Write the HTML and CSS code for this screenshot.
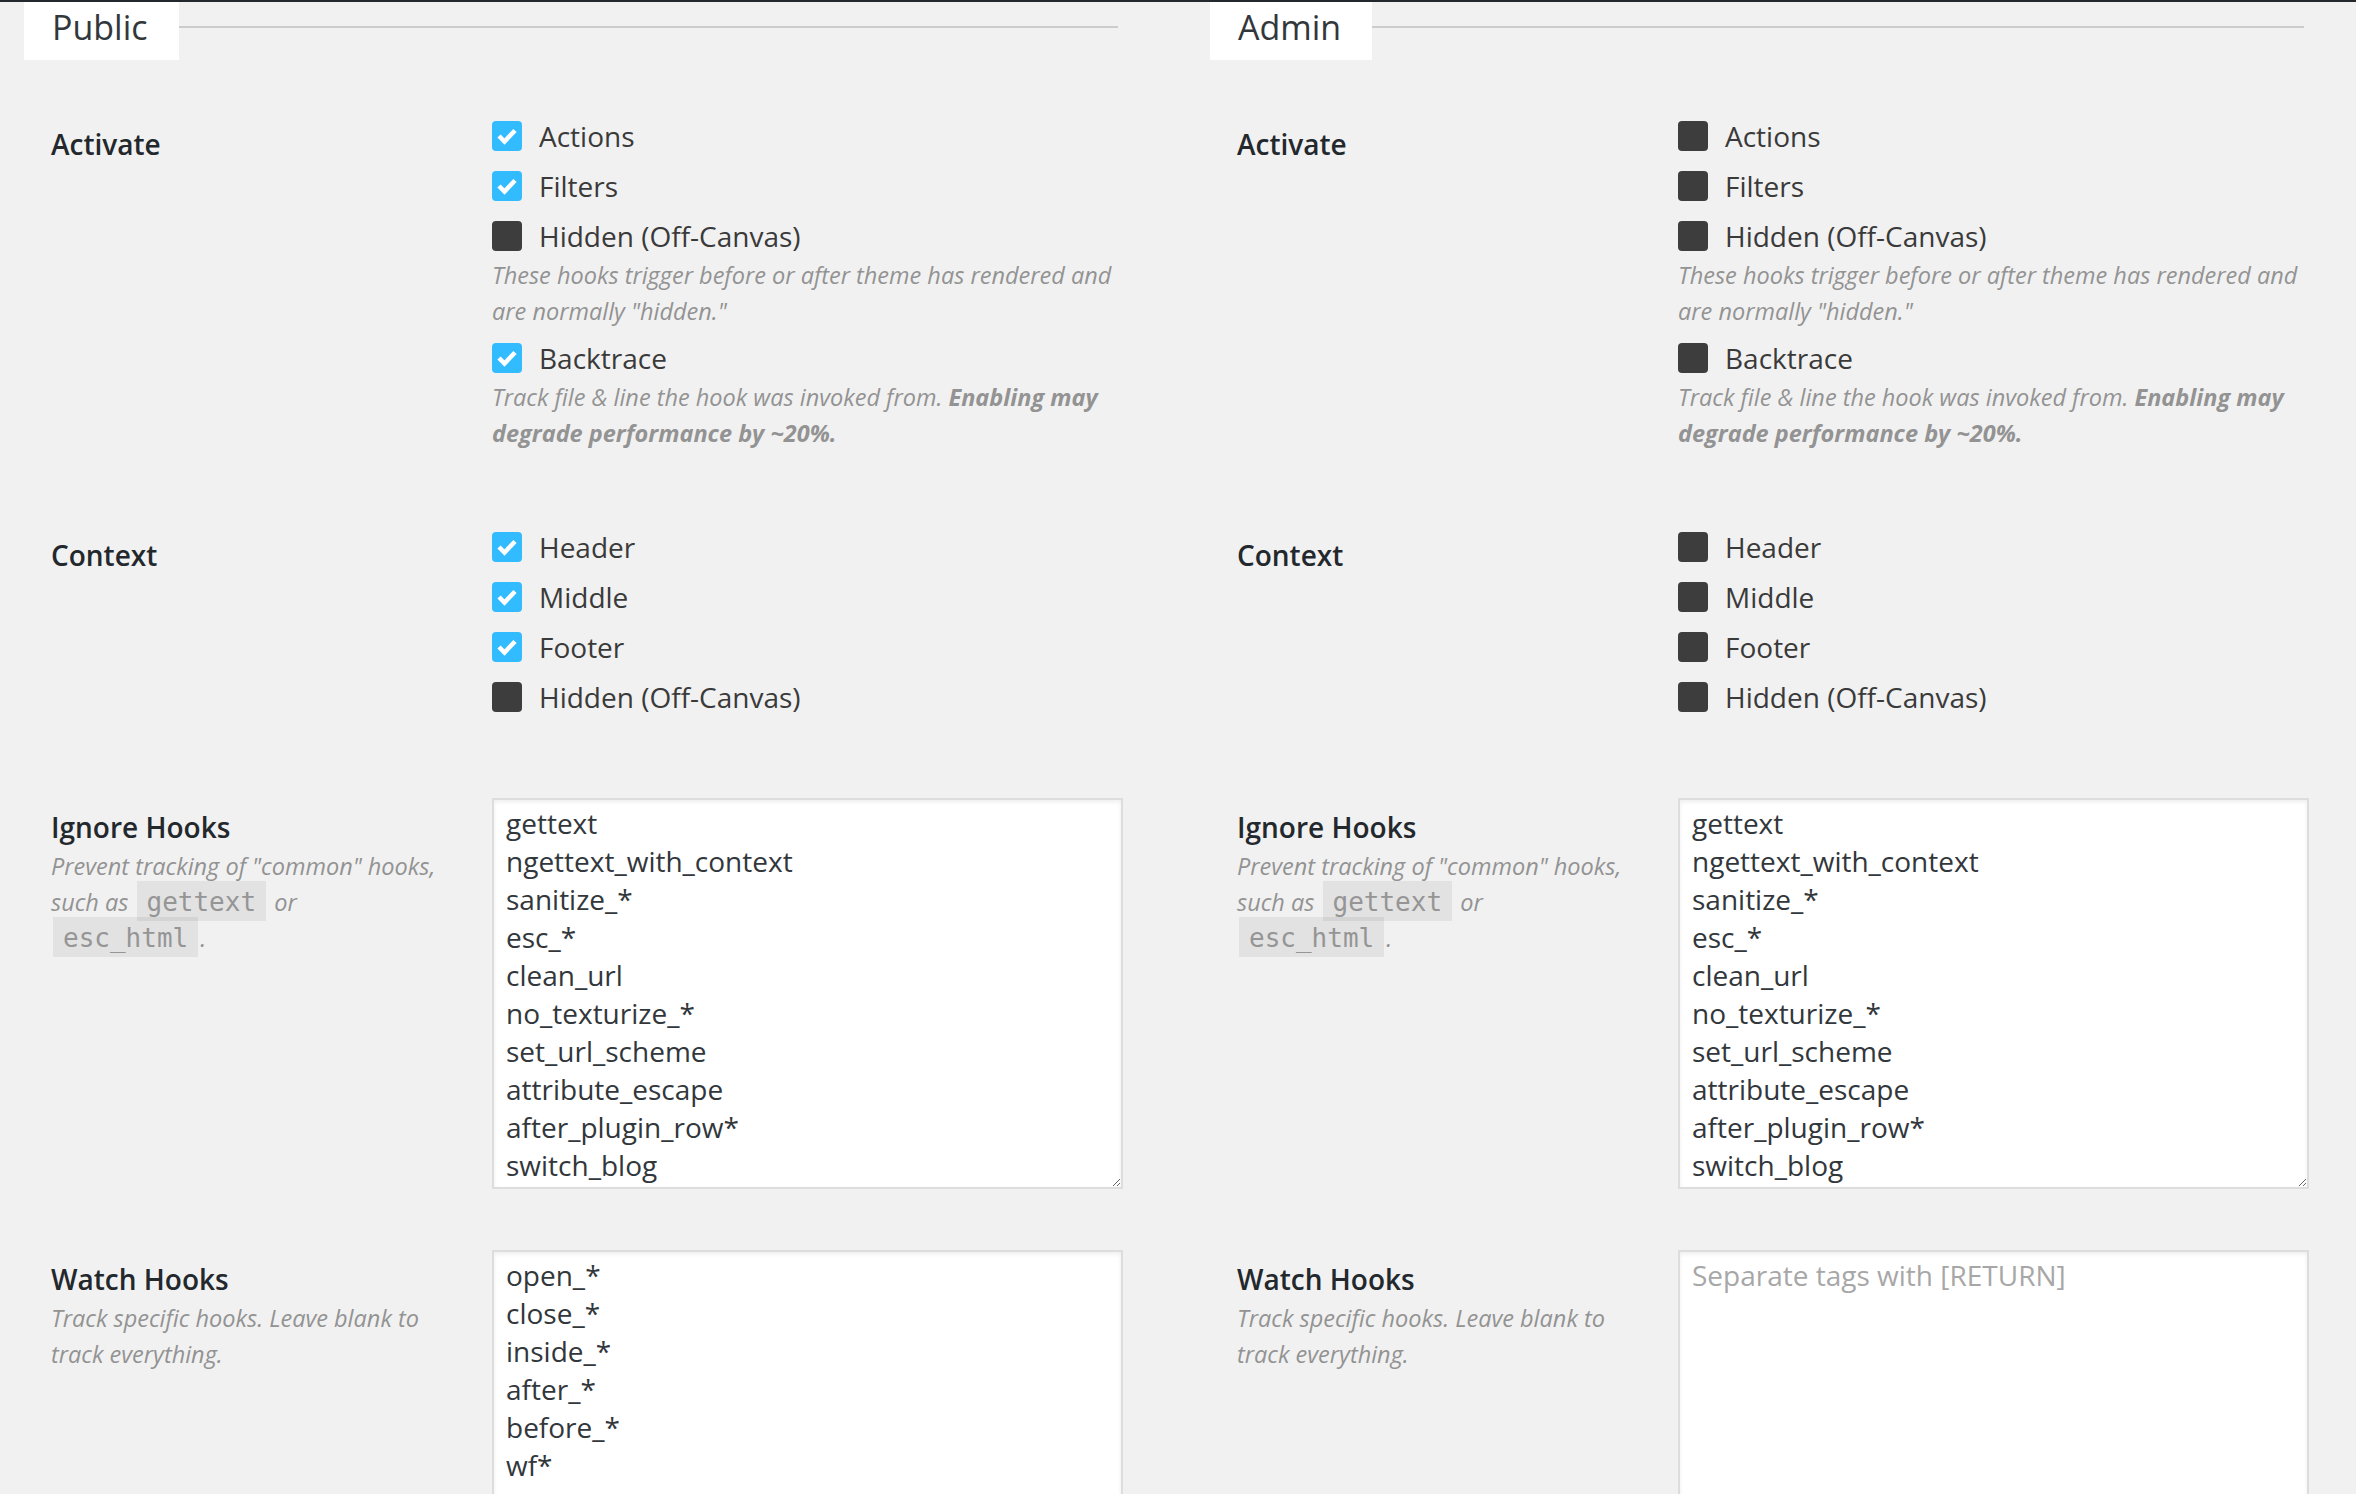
FILE: index.html
```html
<!DOCTYPE html>
<html lang="en">
<head>
<meta charset="utf-8">
<title>Hook settings</title>
<link rel="stylesheet" href="styles.css">
</head>
<body>
<div class="topbar"></div>
<div class="panels">
  <section class="panel">
    <div class="panel-head"><span class="tab">Public</span><span class="rule"></span></div>

    <div class="row row-activate">
      <div class="row-label"><h3>Activate</h3></div>
      <div class="opts">
        <div class="item"><label class="opt"><svg class="cb" viewBox="0 0 30 30"><rect width="30" height="30" rx="4" class="cb-on"/><polyline points="7,15 12.5,20.5 23,9.5" class="tick"/></svg>Actions</label></div>
        <div class="item"><label class="opt"><svg class="cb" viewBox="0 0 30 30"><rect width="30" height="30" rx="4" class="cb-on"/><polyline points="7,15 12.5,20.5 23,9.5" class="tick"/></svg>Filters</label></div>
        <div class="item"><label class="opt"><svg class="cb" viewBox="0 0 30 30"><rect width="30" height="30" rx="4" class="cb-off"/></svg>Hidden (Off-Canvas)</label>
          <p class="desc">These hooks trigger before or after theme has rendered and are normally "hidden."</p></div>
        <div class="item"><label class="opt"><svg class="cb" viewBox="0 0 30 30"><rect width="30" height="30" rx="4" class="cb-on"/><polyline points="7,15 12.5,20.5 23,9.5" class="tick"/></svg>Backtrace</label>
          <p class="desc">Track file &amp; line the hook was invoked from. <strong>Enabling may degrade performance by ~20%.</strong></p></div>
      </div>
    </div>

    <div class="row row-context">
      <div class="row-label"><h3>Context</h3></div>
      <div class="opts">
        <div class="item"><label class="opt"><svg class="cb" viewBox="0 0 30 30"><rect width="30" height="30" rx="4" class="cb-on"/><polyline points="7,15 12.5,20.5 23,9.5" class="tick"/></svg>Header</label></div>
        <div class="item"><label class="opt"><svg class="cb" viewBox="0 0 30 30"><rect width="30" height="30" rx="4" class="cb-on"/><polyline points="7,15 12.5,20.5 23,9.5" class="tick"/></svg>Middle</label></div>
        <div class="item"><label class="opt"><svg class="cb" viewBox="0 0 30 30"><rect width="30" height="30" rx="4" class="cb-on"/><polyline points="7,15 12.5,20.5 23,9.5" class="tick"/></svg>Footer</label></div>
        <div class="item"><label class="opt"><svg class="cb" viewBox="0 0 30 30"><rect width="30" height="30" rx="4" class="cb-off"/></svg>Hidden (Off-Canvas)</label></div>
      </div>
    </div>

    <div class="row row-ignore">
      <div class="row-label"><h3>Ignore Hooks</h3>
        <p class="desc">Prevent tracking of "common" hooks, such as <code>gettext</code> or <code>esc_html</code>.</p></div>
      <div class="fieldbox"><textarea class="hooks" rows="10">
gettext
ngettext_with_context
sanitize_*
esc_*
clean_url
no_texturize_*
set_url_scheme
attribute_escape
after_plugin_row*
switch_blog</textarea></div>
    </div>

    <div class="row row-watch">
      <div class="row-label"><h3>Watch Hooks</h3>
        <p class="desc">Track specific hooks. Leave blank to track everything.</p></div>
      <div class="fieldbox"><textarea class="hooks" rows="10" placeholder="Separate tags with [RETURN]">
open_*
close_*
inside_*
after_*
before_*
wf*</textarea></div>
    </div>
  </section>

  <section class="panel">
    <div class="panel-head"><span class="tab">Admin</span><span class="rule"></span></div>

    <div class="row row-activate">
      <div class="row-label"><h3>Activate</h3></div>
      <div class="opts">
        <div class="item"><label class="opt"><svg class="cb" viewBox="0 0 30 30"><rect width="30" height="30" rx="4" class="cb-off"/></svg>Actions</label></div>
        <div class="item"><label class="opt"><svg class="cb" viewBox="0 0 30 30"><rect width="30" height="30" rx="4" class="cb-off"/></svg>Filters</label></div>
        <div class="item"><label class="opt"><svg class="cb" viewBox="0 0 30 30"><rect width="30" height="30" rx="4" class="cb-off"/></svg>Hidden (Off-Canvas)</label>
          <p class="desc">These hooks trigger before or after theme has rendered and are normally "hidden."</p></div>
        <div class="item"><label class="opt"><svg class="cb" viewBox="0 0 30 30"><rect width="30" height="30" rx="4" class="cb-off"/></svg>Backtrace</label>
          <p class="desc">Track file &amp; line the hook was invoked from. <strong>Enabling may degrade performance by ~20%.</strong></p></div>
      </div>
    </div>

    <div class="row row-context">
      <div class="row-label"><h3>Context</h3></div>
      <div class="opts">
        <div class="item"><label class="opt"><svg class="cb" viewBox="0 0 30 30"><rect width="30" height="30" rx="4" class="cb-off"/></svg>Header</label></div>
        <div class="item"><label class="opt"><svg class="cb" viewBox="0 0 30 30"><rect width="30" height="30" rx="4" class="cb-off"/></svg>Middle</label></div>
        <div class="item"><label class="opt"><svg class="cb" viewBox="0 0 30 30"><rect width="30" height="30" rx="4" class="cb-off"/></svg>Footer</label></div>
        <div class="item"><label class="opt"><svg class="cb" viewBox="0 0 30 30"><rect width="30" height="30" rx="4" class="cb-off"/></svg>Hidden (Off-Canvas)</label></div>
      </div>
    </div>

    <div class="row row-ignore">
      <div class="row-label"><h3>Ignore Hooks</h3>
        <p class="desc">Prevent tracking of "common" hooks, such as <code>gettext</code> or <code>esc_html</code>.</p></div>
      <div class="fieldbox"><textarea class="hooks" rows="10">
gettext
ngettext_with_context
sanitize_*
esc_*
clean_url
no_texturize_*
set_url_scheme
attribute_escape
after_plugin_row*
switch_blog</textarea></div>
    </div>

    <div class="row row-watch">
      <div class="row-label"><h3>Watch Hooks</h3>
        <p class="desc">Track specific hooks. Leave blank to track everything.</p></div>
      <div class="fieldbox"><textarea class="hooks" rows="10" placeholder="Separate tags with [RETURN]"></textarea></div>
    </div>
  </section>
</div>
</body>
</html>
```

FILE: styles.css
```css
* { box-sizing: border-box; }
html, body { margin: 0; padding: 0; }
body {
  background: #f1f1f1;
  font-family: "Open Sans", "DejaVu Sans", sans-serif;
  color: #3a3a3a;
}
.topbar { height: 2px; background: #23282d; }

.panels {
  display: grid;
  grid-template-columns: 1100px 1100px;
  column-gap: 86px;
  padding-left: 24px;
}

.panel-head { display: flex; height: 58px; }
.tab {
  background: #fff;
  font-size: 34px;
  line-height: 46px;
  padding: 2px 31px 10px 28px;
  color: #32373c;
}
.rule {
  flex: 1;
  height: 2px;
  background: #cccccc;
  margin-top: 24px;
  margin-right: 6px;
}

.row {
  display: grid;
  grid-template-columns: 400px 631px;
  column-gap: 41px;
  padding-left: 27px;
  align-items: start;
}
.row-activate { margin-top: 55px; }
.row-context { margin-top: 75px; }
.row-ignore { margin-top: 80px; }
.row-watch { margin-top: 61px; }

.row-label { padding-top: 8px; }
.row-label h3 {
  margin: 0;
  font-size: 28px;
  font-weight: 600;
  line-height: 42px;
  color: #23282d;
}

.desc {
  margin: 0;
  font-size: 23.5px;
  line-height: 36px;
  font-style: italic;
  color: #939393;
}
.desc strong { font-weight: 700; }
.desc code {
  font-family: "DejaVu Sans Mono", "Liberation Mono", monospace;
  font-style: normal;
  font-size: 26px;
  padding: 6px 10px 4px;
  margin: 0 2px;
  background: rgba(0, 0, 0, 0.06);
  color: #959595;
}

.opts { display: flex; flex-direction: column; gap: 8px; }
.opt {
  display: flex;
  align-items: center;
  height: 42px;
  font-size: 28px;
  line-height: 42px;
  color: #3a3a3a;
}
.cb { width: 30px; height: 30px; margin-right: 17px; flex: none; }
.cb-on { fill: #33bbff; }
.cb-off { fill: #3d3d3d; }
.tick {
  fill: none;
  stroke: #fff;
  stroke-width: 4.5;
  stroke-linecap: butt;
  stroke-linejoin: miter;
}

.fieldbox { display: block; }
.hooks {
  display: block;
  width: 631px;
  height: 391px;
  margin: 0;
  padding: 4px 12px;
  border: 2px solid #dddddd;
  border-radius: 0;
  box-shadow: inset 0 2px 4px rgba(0, 0, 0, 0.07);
  background: #fff;
  font-family: "Open Sans", "DejaVu Sans", sans-serif;
  font-size: 28px;
  line-height: 38px;
  color: #32373c;
  overflow: hidden;
  resize: vertical;
  outline: none;
}
.hooks::placeholder { color: #a7a7a7; opacity: 1; }
```
